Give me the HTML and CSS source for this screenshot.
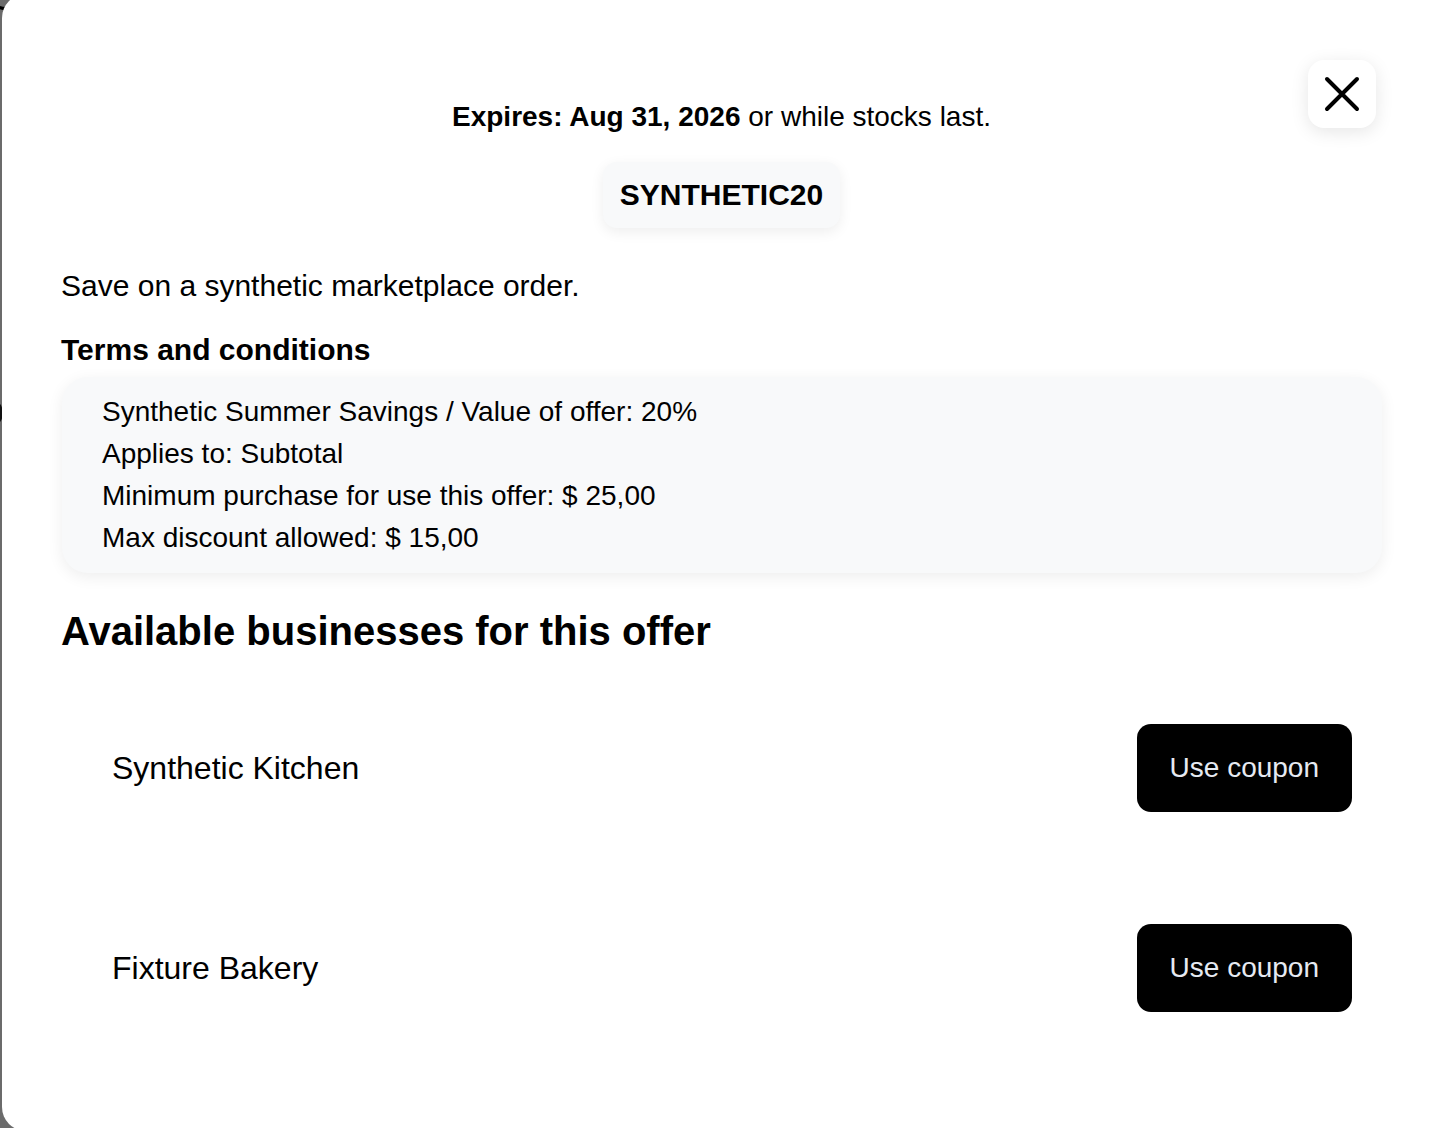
FILE: index.html
```html
<!DOCTYPE html>
<html lang="en">
<head>
<meta charset="utf-8">
<title>Coupon</title>
<link rel="stylesheet" href="styles.css">
</head>
<body>
<div class="backdrop-ring"></div>
<div class="backdrop-dot"></div>
<div class="modal">
  <button class="close" aria-label="Close">
    <svg width="36" height="36" viewBox="0 0 36 36" fill="none" stroke="#000" stroke-width="4" stroke-linecap="round"><path d="M3 3 L33 33 M33 3 L3 33"/></svg>
  </button>
  <p class="expires"><strong>Expires: Aug 31, 2026</strong> or while stocks last.</p>
  <div class="code-wrap"><span class="code">SYNTHETIC20</span></div>
  <p class="desc">Save on a synthetic marketplace order.</p>
  <h3 class="terms-title">Terms and conditions</h3>
  <div class="terms-box">
    <div class="term">Synthetic Summer Savings / Value of offer: 20%</div>
    <div class="term">Applies to: Subtotal</div>
    <div class="term">Minimum purchase for use this offer: $ 25,00</div>
    <div class="term">Max discount allowed: $ 15,00</div>
  </div>
  <h2 class="biz-title">Available businesses for this offer</h2>
  <div class="biz-list">
    <div class="biz-row">
      <span class="biz-name">Synthetic Kitchen</span>
      <button class="use-btn">Use coupon</button>
    </div>
    <div class="biz-row">
      <span class="biz-name">Fixture Bakery</span>
      <button class="use-btn">Use coupon</button>
    </div>
  </div>
</div>
</body>
</html>
```
FILE: styles.css
```css
* { box-sizing: border-box; }
html, body {
  margin: 0;
  padding: 0;
  width: 1442px;
  height: 1128px;
  overflow: hidden;
}
body {
  background: #6b6b6b;
  font-family: "Liberation Sans", Arial, sans-serif;
  color: #000;
  position: relative;
}
.backdrop-ring {
  position: absolute;
  left: -14px;
  top: -30px;
  width: 40px;
  height: 40px;
  border: 3px solid #000;
  border-radius: 50%;
}
.backdrop-dot {
  position: absolute;
  left: -8px;
  top: 403px;
  width: 11px;
  height: 20px;
  background: #111;
  border-radius: 50%;
}
.modal {
  position: relative;
  margin-left: 2px;
  margin-top: -6px;
  width: 1460px;
  height: 1137px;
  background: #fff;
  border-radius: 24px 0 0 24px;
  padding: 0 80px 0 59px;
}
.close {
  position: absolute;
  top: 66px;
  right: 86px;
  width: 68px;
  height: 68px;
  border: none;
  background: #fff;
  border-radius: 16px;
  box-shadow: 0 4px 18px rgba(0,0,0,0.1);
  display: flex;
  align-items: center;
  justify-content: center;
  padding: 0;
}
.expires {
  margin: 0;
  padding-top: 106px;
  font-size: 28px;
  line-height: 34px;
  text-align: center;
}
.code-wrap {
  display: flex;
  justify-content: center;
  margin-top: 28px;
}
.code {
  font-size: 30px;
  font-weight: bold;
  line-height: 34px;
  padding: 16px 17px;
  background: #f8f9fa;
  border-radius: 14px;
  box-shadow: 0 4px 14px rgba(0,0,0,0.07);
}
.desc {
  margin: 40px 0 0;
  font-size: 30px;
  line-height: 36px;
}
.terms-title {
  margin: 28px 0 0;
  font-size: 30px;
  font-weight: bold;
  line-height: 36px;
}
.terms-box {
  margin: 9px 0 0 1px;
  background: #f8f9fa;
  border-radius: 26px;
  padding: 14px 40px;
  box-shadow: 0 4px 16px rgba(0,0,0,0.07);
}
.term {
  font-size: 28px;
  line-height: 42px;
}
.biz-title {
  margin: 34px 0 0;
  font-size: 40px;
  font-weight: bold;
  line-height: 48px;
}
.biz-list {
  margin-top: 13px;
  display: flex;
  flex-direction: column;
}
.biz-row {
  height: 200px;
  display: flex;
  align-items: center;
  justify-content: space-between;
  padding: 0 30px 0 51px;
}
.biz-name {
  font-size: 32px;
  line-height: 38px;
}
.use-btn {
  font-family: "Liberation Sans", Arial, sans-serif;
  font-size: 28px;
  line-height: 34px;
  padding: 27px 33px;
  background: #000;
  color: #e6eaf2;
  border: none;
  border-radius: 14px;
}
```
